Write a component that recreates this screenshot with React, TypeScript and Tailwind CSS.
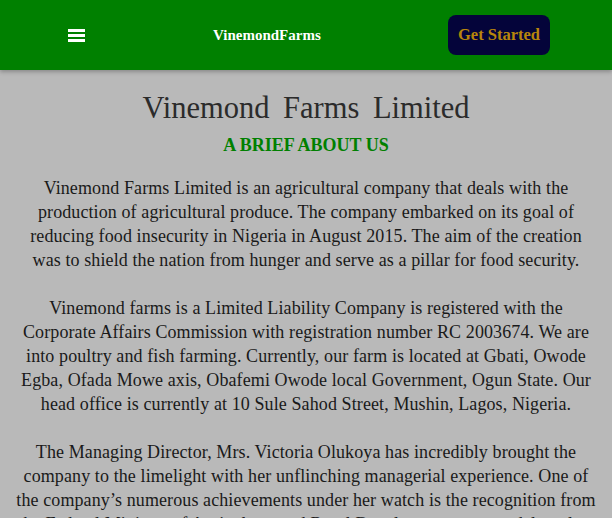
export default function App() {
  return (
    <div className="min-h-[518px] bg-[#b9b9b9] font-['Liberation_Serif',serif] text-[#1a1a1a]">
      <header className="flex h-[70px] items-center bg-[#008000] px-[68px] shadow-[0_2px_4px_rgba(0,0,0,0.25)]">
        <div className="flex w-[17px] flex-col gap-[2px] pt-[1px]">
          <span className="h-[3px] bg-white" />
          <span className="h-[3px] bg-white" />
          <span className="h-[3px] bg-white" />
        </div>
        <div className="ml-[128px] text-[15px] font-bold text-white">VinemondFarms</div>
        <button className="ml-auto mr-[-6px] h-[40px] rounded-[8px] bg-[#04043a] px-[10px] text-[16.5px] font-bold text-[#b8860b]">
          Get Started
        </button>
      </header>

      <main className="px-[15px] text-center">
        <h1 className="mt-[20px] text-[30.5px] leading-[36px] text-[#2b2b2b] [word-spacing:6px]">
          Vinemond Farms Limited
        </h1>
        <h2 className="mt-[7px] text-[18px] font-bold leading-[24px] text-[#008000]">A BRIEF ABOUT US</h2>

        <div className="mt-[19px] space-y-[24px] text-[18px] leading-[24px] tracking-[0.1px]">
          <p>
            Vinemond Farms Limited is an agricultural company that deals with the production of agricultural
            produce. The company embarked on its goal of reducing food insecurity in Nigeria in August 2015. The
            aim of the creation was to shield the nation from hunger and serve as a pillar for food security.
          </p>
          <p>
            Vinemond farms is a Limited Liability Company is registered with the Corporate Affairs Commission with
            registration number RC 2003674. We are into poultry and fish farming. Currently, our farm is located at
            Gbati, Owode Egba, Ofada Mowe axis, Obafemi Owode local Government, Ogun State. Our head office is
            currently at 10 Sule Sahod Street, Mushin, Lagos, Nigeria.
          </p>
          <p>
            The Managing Director, Mrs. Victoria Olukoya has incredibly brought the company to the limelight with
            her unflinching managerial experience. One of the company’s numerous achievements under her watch is
            the recognition from the Federal Ministry of Agriculture and Rural Development as a model poultry farm.
          </p>
        </div>
      </main>
    </div>
  );
}
